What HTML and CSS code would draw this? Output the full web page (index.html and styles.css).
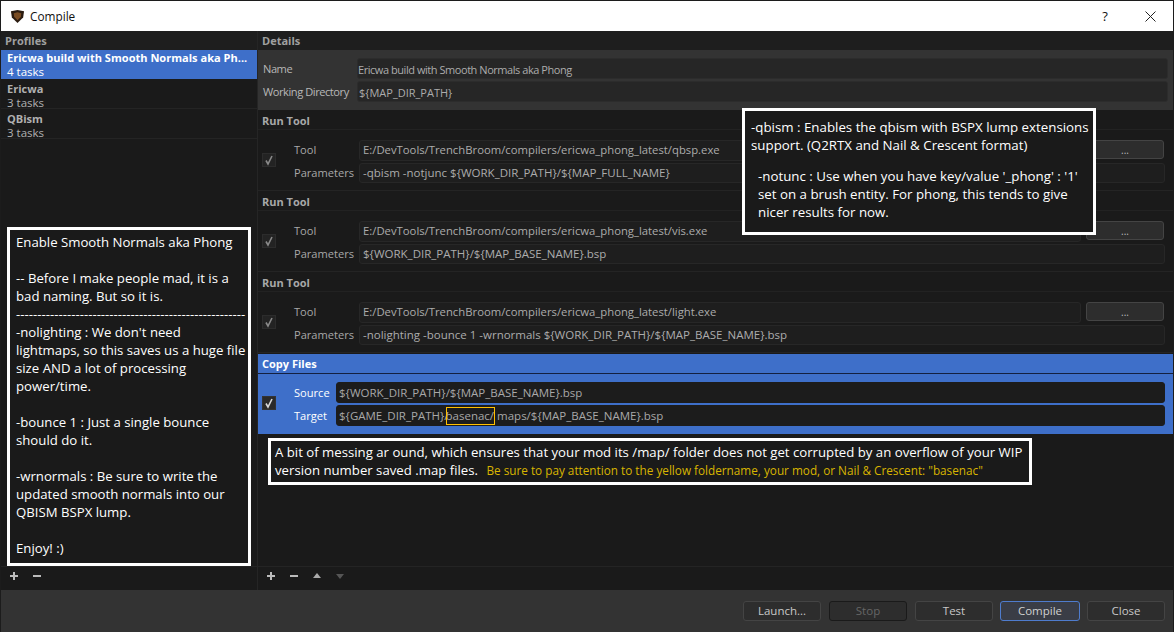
FILE: index.html
```html
<!DOCTYPE html>
<html lang="en">
<head>
<meta charset="utf-8">
<title>Compile</title>
<link rel="stylesheet" href="styles.css">
</head>
<body>
<div class="window">
  <header class="titlebar">
    <svg class="logo" width="15" height="15" viewBox="0 0 16 16"><path d="M1 2.5 L8 1 L15 2.5 L14 9 L8 15 L2 9 Z" fill="#2b1c10"/><path d="M4 4.5 L8 3.5 L12 4.5 L11.5 8.5 L8 12 L4.5 8.5 Z" fill="#7a4c22"/></svg>
    <span class="title">Compile</span>
    <span class="help">?</span>
    <svg class="close" width="11" height="11" viewBox="0 0 11 11"><path d="M0.5 0.5 L10.5 10.5 M10.5 0.5 L0.5 10.5" stroke="#222" stroke-width="1" fill="none"/></svg>
  </header>
  <main class="main">
    <aside class="profiles">
      <h2 class="pane-head">Profiles</h2>
      <ul class="profile-list">
        <li class="profile selected"><b>Ericwa build with Smooth Normals aka Ph...</b><span>4 tasks</span></li>
        <li class="profile"><b>Ericwa</b><span>3 tasks</span></li>
        <li class="profile"><b>QBism</b><span>3 tasks</span></li>
      </ul>
      <div class="toolbar">
        <svg class="tool" width="10" height="10" viewBox="0 0 10 10"><path d="M5 1 V9 M1 5 H9" stroke="#bbb" stroke-width="2"/></svg>
        <svg class="tool" width="10" height="10" viewBox="0 0 10 10"><path d="M1 5 H9" stroke="#bbb" stroke-width="2"/></svg>
      </div>
    </aside>
    <section class="details">
      <h2 class="pane-head">Details</h2>
      <div class="form">
        <div class="form-row"><label class="form-label">Name</label><div class="field name-field">Ericwa build with Smooth Normals aka Phong</div></div>
        <div class="form-row"><label class="form-label">Working Directory</label><div class="field">${MAP_DIR_PATH}</div></div>
      </div>
      <div class="tasks">
        <article class="task">
          <h3 class="task-head">Run Tool</h3>
          <div class="task-body">
            <span class="check"><svg width="12" height="12" viewBox="0 0 12 12"><path d="M3 6.5 L5 10 L9 2" stroke="#8a8a8a" stroke-width="1.6" fill="none"/></svg></span>
            <div class="task-rows">
              <div class="row"><label class="row-label">Tool</label><div class="field tool-path">E:/DevTools/TrenchBroom/compilers/ericwa_phong_latest/qbsp.exe</div><button class="browse">...</button></div>
              <div class="row"><label class="row-label">Parameters</label><div class="field">-qbism -notjunc ${WORK_DIR_PATH}/${MAP_FULL_NAME}</div></div>
            </div>
          </div>
        </article>
        <article class="task">
          <h3 class="task-head">Run Tool</h3>
          <div class="task-body">
            <span class="check"><svg width="12" height="12" viewBox="0 0 12 12"><path d="M3 6.5 L5 10 L9 2" stroke="#8a8a8a" stroke-width="1.6" fill="none"/></svg></span>
            <div class="task-rows">
              <div class="row"><label class="row-label">Tool</label><div class="field tool-path">E:/DevTools/TrenchBroom/compilers/ericwa_phong_latest/vis.exe</div><button class="browse">...</button></div>
              <div class="row"><label class="row-label">Parameters</label><div class="field">${WORK_DIR_PATH}/${MAP_BASE_NAME}.bsp</div></div>
            </div>
          </div>
        </article>
        <article class="task">
          <h3 class="task-head">Run Tool</h3>
          <div class="task-body">
            <span class="check"><svg width="12" height="12" viewBox="0 0 12 12"><path d="M3 6.5 L5 10 L9 2" stroke="#8a8a8a" stroke-width="1.6" fill="none"/></svg></span>
            <div class="task-rows">
              <div class="row"><label class="row-label">Tool</label><div class="field tool-path">E:/DevTools/TrenchBroom/compilers/ericwa_phong_latest/light.exe</div><button class="browse">...</button></div>
              <div class="row"><label class="row-label">Parameters</label><div class="field">-nolighting -bounce 1 -wrnormals ${WORK_DIR_PATH}/${MAP_BASE_NAME}.bsp</div></div>
            </div>
          </div>
        </article>
        <article class="copy">
          <h3 class="copy-head">Copy Files</h3>
          <div class="copy-body">
            <span class="check on"><svg width="12" height="12" viewBox="0 0 12 12"><path d="M3 6.5 L5 10 L9 2" stroke="#d8d8d8" stroke-width="1.6" fill="none"/></svg></span>
            <div class="copy-rows">
              <div class="row"><label class="row-label copy-label">Source</label><div class="field dark">${WORK_DIR_PATH}/${MAP_BASE_NAME}.bsp</div></div>
              <div class="row"><label class="row-label copy-label">Target</label><div class="field dark">${GAME_DIR_PATH}/<span class="mark">basenac/</span>maps/${MAP_BASE_NAME}.bsp</div></div>
            </div>
          </div>
        </article>
      </div>
      <div class="toolbar">
        <svg class="tool" width="10" height="10" viewBox="0 0 10 10"><path d="M5 1 V9 M1 5 H9" stroke="#bbb" stroke-width="2"/></svg>
        <svg class="tool" width="10" height="10" viewBox="0 0 10 10"><path d="M1 5 H9" stroke="#bbb" stroke-width="2"/></svg>
        <svg class="tool" width="10" height="10" viewBox="0 0 10 10"><path d="M5 2 L9 7 H1 Z" fill="#aaa"/></svg>
        <svg class="tool" width="10" height="10" viewBox="0 0 10 10"><path d="M5 8 L9 3 H1 Z" fill="#555"/></svg>
      </div>
    </section>
  </main>
  <footer class="footer">
    <button class="btn">Launch...</button>
    <button class="btn off">Stop</button>
    <button class="btn">Test</button>
    <button class="btn default">Compile</button>
    <button class="btn">Close</button>
  </footer>
  <div class="note note-left">Enable Smooth Normals aka Phong<br><br>-- Before I make people mad, it is a<br>bad naming. But so it is.<br>------------------------------------------------------<br>-nolighting : We don't need<br>lightmaps, so this saves us a huge file<br>size AND a lot of processing<br>power/time.<br><br>-bounce 1 : Just a single bounce<br>should do it.<br><br>-wrnormals : Be sure to write the<br>updated smooth normals into our<br>QBISM BSPX lump.<br><br>Enjoy! :)</div>
  <div class="note note-right">
    <p class="note-a">-qbism : Enables the qbism with BSPX lump extensions<br>support. (Q2RTX and Nail &amp; Crescent format)</p>
    <p class="note-b">-notunc : Use when you have key/value '_phong' : '1'<br>set on a brush entity. For phong, this tends to give<br>nicer results for now.</p>
  </div>
  <div class="note note-bottom">A bit of messing ar ound, which ensures that your mod its /map/ folder does not get corrupted by an overflow of your WIP<br>version number saved .map files. <span class="yellow">Be sure to pay attention to the yellow foldername, your mod, or Nail &amp; Crescent: "basenac"</span></div>
</div>
</body>
</html>
```
FILE: styles.css
```css
* { box-sizing: border-box; }
html, body { margin: 0; padding: 0; height: 100%; overflow: hidden; background: #1a1a1a; }
body { font-family: "Open Sans", "Noto Sans", sans-serif; font-size: 11.5px; color: #b8b8b8; }
.window { position: relative; width: 1174px; height: 632px; display: flex; flex-direction: column; padding: 1px 1px 0 1px; background: #1c1c1c; }
.titlebar { height: 30px; flex: none; background: #fff; display: flex; align-items: center; padding: 0 17px 0 9px; color: #111; font-size: 11.8px; }
.logo { margin-right: 5px; }
.title { flex: 1; }
.help { width: 12px; margin-right: 34px; font-size: 13px; text-align: center; }
.main { flex: 1; min-height: 0; display: grid; grid-template-columns: 257px 1fr; background: #1a1a1a; }
.profiles { display: flex; flex-direction: column; border-right: 1px solid #252525; }
.details { display: flex; flex-direction: column; min-width: 0; }
.pane-head { margin: 0; height: 19px; padding: 0 4px; font-size: 11px; line-height: 20px; font-weight: 700; color: #a0a0a0; background: #1e1e1e; }
.profile-list { list-style: none; margin: 0; padding: 0; flex: 1; }
.profile { height: 30px; padding: 3px 6px 0; border-bottom: 1px solid #242424; display: flex; flex-direction: column; color: #b0b0b0; }
.profile b { font-weight: 700; font-size: 11.05px; line-height: 14px; white-space: nowrap; }
.profile span { line-height: 13px; }
.profile.selected { height: 29px; padding-top: 1px; background: #3e6fc9; color: #fff; border-bottom: 0; }
.toolbar { height: 24px; flex: none; display: flex; align-items: center; gap: 13px; padding: 0 8px 5px; border-top: 1px solid #242424; }
.form { height: 60px; flex: none; background: #333; padding: 8px 5px 0 5px; display: flex; flex-direction: column; gap: 2px; }
.form-row { display: flex; align-items: center; height: 21px; }
.form-label { width: 94px; flex: none; color: #b8b8b8; font-size: 11.1px; letter-spacing: -0.45px; white-space: nowrap; }
.field { flex: 1; min-width: 0; height: 21px; line-height: 20px; padding: 0 2px; background: #1e1e1e; border: 1px solid #272727; border-radius: 3px; color: #acacac; white-space: nowrap; }
.form .field { background: #262626; border-color: #2c2c2c; padding: 0 1px; font-size: 11px; line-height: 21px; }
.form .name-field { padding: 0; letter-spacing: -0.45px; }
.tool-path { font-size: 11.3px; }
.tasks { flex: 1; min-height: 0; }
.task { height: 81px; border-bottom: 1px solid #242424; }
.task-head { margin: 0; height: 20px; padding: 0 4px; line-height: 21px; font-size: 11px; font-weight: 700; color: #a8a8a8; border-bottom: 1px solid #222; }
.task-body { display: flex; align-items: flex-start; height: 60px; padding: 10px 9px 0 4px; }
.check { width: 14px; height: 14px; flex: none; margin: 13px 18px 0 0; display: flex; align-items: center; justify-content: center; border: 1px solid #2c2c2c; background: #232323; }
.check.on { background: #2a2a2a; border-color: #333; margin-top: 14px; }
.task-rows, .copy-rows { flex: 1; min-width: 0; display: flex; flex-direction: column; gap: 2px; }
.row { display: flex; align-items: flex-start; height: 21px; }
.row-label { width: 65px; flex: none; color: #a8a8a8; font-size: 11.1px; line-height: 19px; }
.task-rows .field { padding: 0 3px; line-height: 18px; }
.task-rows .row:last-child .field { height: 20px; margin-right: -1px; }
.browse { width: 78px; height: 19px; margin-left: 5px; flex: none; background: #2d2d2d; border: 1px solid #444; border-radius: 3px; color: #bbb; font: inherit; font-size: 10px; line-height: 14px; padding: 0; }
.copy { background: #3e6fc9; height: 80px; margin-top: 1px; }
.copy-head { margin: 0; height: 20px; padding: 0 4px; line-height: 19px; font-size: 11px; font-weight: 700; color: #fff; border-bottom: 1px solid #142040; }
.copy-body { display: flex; align-items: flex-start; padding: 8px 8px 0 4px; }
.copy-rows .row-label { width: 42px; color: #fff; line-height: 21px; }
.field.dark { background: #1c1c1c; border-color: #1c1c1c; color: #a8a8a8; }
.mark { display: inline-block; height: 18px; line-height: 17px; margin: 0 2px 0 -3px; outline: 1px solid #ffc000; outline-offset: -1px; padding: 0 1px 0 0; }
.footer { height: 42px; flex: none; background: #333; display: flex; justify-content: flex-end; gap: 8px; padding: 11px 8px 0 0; }
.btn { width: 78px; height: 20px; padding: 0; background: #2d2d2d; border: 1px solid #444; border-radius: 3px; color: #c8c8c8; font: inherit; font-size: 11.5px; line-height: 16px; }
.btn.off { color: #666; border-color: #1a1a1a; }
.btn.default { width: 80px; margin: 0 -1px; background: #3a3d46; border-color: #4f7ccd; color: #d0d0d0; }
.note { position: absolute; background: #1a1a1a; border: 3px solid #fff; color: #fff; font-size: 13.2px; line-height: 18px; white-space: nowrap; }
.note-left { left: 7px; top: 227px; width: 244px; height: 339px; padding: 3px 0 0 6px; }
.note-right { left: 742px; top: 108px; width: 354px; height: 127px; padding: 0; font-size: 13.3px; }
.note-a { margin: 0; padding: 7px 0 0 6px; }
.note-b { margin: 0; padding: 13px 0 0 13px; }
.note-bottom { left: 268px; top: 438px; width: 764px; height: 47px; padding: 2px 0 0 4px; }
.yellow { color: #d8b400; font-size: 11.75px; margin-left: 5px; }
```
